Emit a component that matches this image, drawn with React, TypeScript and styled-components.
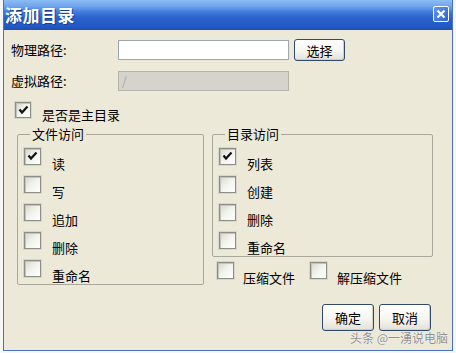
import React from 'react'
import styled, { createGlobalStyle } from 'styled-components'

const GlobalStyle = createGlobalStyle`
  html, body {
    margin: 0;
    padding: 0;
    background: #f7f7f5;
  }
  body {
    font-family: "Noto Sans CJK SC", "Noto Sans", sans-serif;
    font-size: 13px;
    color: #000;
  }
`

const Page = styled.div`
  width: 456px;
  height: 353px;
  overflow: hidden;
  padding-left: 3px;
  box-sizing: border-box;
`

const Window = styled.div`
  position: relative;
  width: 450px;
  height: 351px;
  box-sizing: border-box;
  background: #ece9d8;
  border: 1px solid #4a72c0;
  border-top: none;
  display: flex;
  flex-direction: column;
`

const TitleBar = styled.div`
  height: 30px;
  flex-shrink: 0;
  display: flex;
  justify-content: space-between;
  padding: 0 3px 0 1px;
  background: linear-gradient(
    #8dbcf4 0%,
    #6da4ee 22%,
    #3d78dc 42%,
    #2a61cc 60%,
    #2459c4 88%,
    #1d4fb4 100%
  );
`

const Title = styled.div`
  color: #fff;
  font-size: 17px;
  font-weight: 700;
  line-height: 30px;
  letter-spacing: 0.5px;
  text-shadow: 1px 1px 0 #1a3f8f;
`

const CloseButton = styled.div`
  width: 14px;
  height: 14px;
  margin-top: 6px;
  border: 1px solid #fff;
  border-radius: 2px;
  background: linear-gradient(135deg, #5f9af0, #2c62d0);
  display: flex;
  align-items: center;
  justify-content: center;
`

const Body = styled.div`
  flex: 1;
  display: flex;
  flex-direction: column;
  padding: 9px 0 0 7px;
`

const FieldRow = styled.div<{ $gap?: number }>`
  display: flex;
  align-items: center;
  height: 22px;
  margin-top: ${(p) => p.$gap ?? 0}px;
`

const FieldLabel = styled.div`
  width: 107px;
  line-height: 16px;
`

const TextInput = styled.div<{ $disabled?: boolean }>`
  width: 171px;
  height: 20px;
  box-sizing: border-box;
  border: 1px solid ${(p) => (p.$disabled ? '#b4b1a8' : '#9ea6b0')};
  background: ${(p) => (p.$disabled ? '#d6d3cc' : '#fff')};
  color: #a7a59e;
  font-size: 12px;
  line-height: 18px;
  padding-left: 3px;
`

const Button = styled.div<{ $width?: number; $height?: number }>`
  width: ${(p) => p.$width ?? 52}px;
  height: ${(p) => p.$height ?? 27}px;
  box-sizing: border-box;
  border: 1px solid #2f4a6c;
  border-radius: 3px;
  background: linear-gradient(#ffffff 0%, #f6f5f0 55%, #e3e0d6 100%);
  box-shadow: inset -1px -1px 0 #d2cfc4;
  display: flex;
  align-items: center;
  justify-content: center;
  font-size: 13px;
`

const CheckRow = styled.div<{ $last?: boolean; $indent?: number }>`
  display: flex;
  align-items: flex-start;
  margin-left: ${(p) => p.$indent ?? 0}px;
  margin-bottom: ${(p) => (p.$last ? 0 : 4)}px;
`

const Box = styled.div<{ $size: number }>`
  width: ${(p) => p.$size}px;
  height: ${(p) => p.$size}px;
  flex-shrink: 0;
  box-sizing: border-box;
  border: 1px solid #8e8e86;
  box-shadow: inset 1px 1px 0 #c4c3ba, 0 0 0 1px #d8d6cb;
  background: linear-gradient(135deg, #d6d5cc 0%, #f1f1ec 45%, #ffffff 100%);
  display: flex;
  align-items: flex-start;
  justify-content: flex-start;
`

const CheckText = styled.div<{ $gap: number; $drop: number }>`
  margin-left: ${(p) => p.$gap}px;
  padding-top: ${(p) => p.$drop}px;
  line-height: 16px;
  white-space: nowrap;
`

const Checkbox = ({
  label,
  checked,
  size = 17,
  gap = 11,
  drop = 8,
  last,
  indent,
}: {
  label: string
  checked?: boolean
  size?: number
  gap?: number
  drop?: number
  last?: boolean
  indent?: number
}) => (
  <CheckRow $last={last} $indent={indent}>
    <Box $size={size}>
      {checked && (
        <svg width="11" height="10" viewBox="0 0 11 10" style={{ margin: '2px 0 0 2px' }}>
          <polyline points="1.5,4.5 4,7.5 9.5,1.5" fill="none" stroke="#111" strokeWidth="2.2" />
        </svg>
      )}
    </Box>
    <CheckText $gap={gap} $drop={drop}>
      {label}
    </CheckText>
  </CheckRow>
)

const MainCheck = styled.div`
  margin: 10px 0 0 4px;
`

const Groups = styled.div`
  display: flex;
  gap: 8px;
  margin: 3px 0 0 6px;
`

const Column = styled.div`
  display: flex;
  flex-direction: column;
`

const Group = styled.fieldset<{ $width: number }>`
  width: ${(p) => p.$width}px;
  box-sizing: border-box;
  margin: 0;
  padding: 6px 6px 0;
  border: 1px solid #a9a79b;
  border-radius: 2px;
  min-width: 0;
`

const Legend = styled.legend`
  margin-left: 6px;
  padding: 0 2px;
  line-height: 16px;
  font-size: 13px;
`

const ExtraRow = styled.div`
  display: flex;
  margin: 5px 0 0 5px;
`

const Footer = styled.div`
  display: flex;
  justify-content: flex-end;
  gap: 5px;
  margin-top: 18px;
  padding-right: 21px;
`

const Watermark = styled.div`
  position: absolute;
  right: 4px;
  bottom: 6px;
  font-size: 12px;
  line-height: 13px;
  color: #8e8e8e;
  text-shadow: 0 0 1px #fff, 0 0 1px #fff;
`

const App = () => (
  <>
    <GlobalStyle />
    <Page>
      <Window>
        <TitleBar>
          <Title>添加目录</Title>
          <CloseButton>
            <svg width="10" height="10" viewBox="0 0 10 10">
              <path d="M1.5 1.5 L8.5 8.5 M8.5 1.5 L1.5 8.5" stroke="#fff" strokeWidth="2.2" />
            </svg>
          </CloseButton>
        </TitleBar>
        <Body>
          <FieldRow>
            <FieldLabel>物理路径:</FieldLabel>
            <TextInput />
            <Button $width={51} $height={22} style={{ marginLeft: 5 }}>
              选择
            </Button>
          </FieldRow>
          <FieldRow $gap={9}>
            <FieldLabel>虚拟路径:</FieldLabel>
            <TextInput $disabled>/</TextInput>
          </FieldRow>
          <MainCheck>
            <Checkbox label="是否是主目录" checked size={16} gap={11} drop={5} last />
          </MainCheck>
          <Groups>
            <Column>
              <Group $width={187}>
                <Legend>文件访问</Legend>
                <Checkbox label="读" checked />
                <Checkbox label="写" />
                <Checkbox label="追加" />
                <Checkbox label="删除" />
                <Checkbox label="重命名" last />
              </Group>
            </Column>
            <Column>
              <Group $width={221}>
                <Legend>目录访问</Legend>
                <Checkbox label="列表" checked />
                <Checkbox label="创建" />
                <Checkbox label="删除" />
                <Checkbox label="重命名" last />
              </Group>
              <ExtraRow>
                <Checkbox label="压缩文件" gap={9} last />
                <Checkbox label="解压缩文件" gap={10} last indent={15} />
              </ExtraRow>
            </Column>
          </Groups>
          <Footer>
            <Button>确定</Button>
            <Button>取消</Button>
          </Footer>
        </Body>
        <Watermark>头条 @一湧说电脑</Watermark>
      </Window>
    </Page>
  </>
)

export default App
